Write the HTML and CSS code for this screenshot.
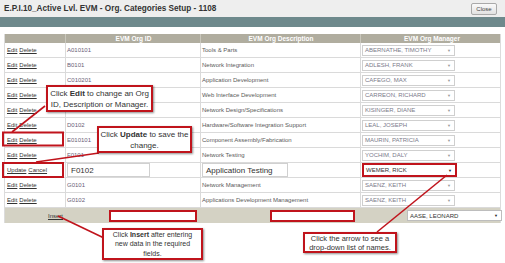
FILE: index.html
```html
<!DOCTYPE html>
<html lang="en">

<head>
  <meta charset="UTF-8" />
  <title>EVM Org Categories Setup</title>
  <link rel="stylesheet" href="styles.css">
</head>

<body>
  <div class="page">
    <div class="titlebar">
      <h1>E.P.I.10_Active Lvl. EVM - Org. Categories Setup - 1108</h1>
      <button class="close">Close</button>
    </div>
    <div class="band"></div>

    <div class="grid">
      <div class="row head">
        <div></div>
        <div>EVM Org ID</div>
        <div>EVM Org Description</div>
        <div>EVM Org Manager</div>
      </div>

      <div class="row">
        <div class="links"><a>Edit</a> <a>Delete</a></div>
        <div class="id">A010101</div>
        <div>Tools &amp; Parts</div>
        <div><span class="sel">ABERNATHE, TIMOTHY<i>▼</i></span></div>
      </div>
      <div class="row">
        <div class="links"><a>Edit</a> <a>Delete</a></div>
        <div class="id">B0101</div>
        <div>Network Integration</div>
        <div><span class="sel">ADLESH, FRANK<i>▼</i></span></div>
      </div>
      <div class="row">
        <div class="links"><a>Edit</a> <a>Delete</a></div>
        <div class="id">C010201</div>
        <div>Application Development</div>
        <div><span class="sel">CAFEGO, MAX<i>▼</i></span></div>
      </div>
      <div class="row">
        <div class="links"><a>Edit</a> <a>Delete</a></div>
        <div class="id">C010301</div>
        <div>Web Interface Development</div>
        <div><span class="sel">CARREON, RICHARD<i>▼</i></span></div>
      </div>
      <div class="row">
        <div class="links"><a>Edit</a> <a>Delete</a></div>
        <div class="id">D0101</div>
        <div>Network Design/Specifications</div>
        <div><span class="sel">KISINGER, DIANE<i>▼</i></span></div>
      </div>
      <div class="row">
        <div class="links"><a>Edit</a> <a>Delete</a></div>
        <div class="id">D0102</div>
        <div>Hardware/Software Integration Support</div>
        <div><span class="sel">LEAL, JOSEPH<i>▼</i></span></div>
      </div>
      <div class="row">
        <div class="links"><a>Edit</a> <a>Delete</a></div>
        <div class="id">E010101</div>
        <div>Component Assembly/Fabrication</div>
        <div><span class="sel">MAURIN, PATRICIA<i>▼</i></span></div>
      </div>
      <div class="row">
        <div class="links"><a>Edit</a> <a>Delete</a></div>
        <div class="id">F0101</div>
        <div>Network Testing</div>
        <div><span class="sel">YOCHIM, DALY<i>▼</i></span></div>
      </div>
      <div class="row editing">
        <div class="links"><a>Update</a> <a>Cancel</a></div>
        <div><span class="field id-field">F0102</span></div>
        <div><span class="field desc-field">Application Testing</span></div>
        <div><span class="sel dark hl">WEMER, RICK<i>▼</i></span></div>
      </div>
      <div class="row">
        <div class="links"><a>Edit</a> <a>Delete</a></div>
        <div class="id">G0101</div>
        <div>Network Management</div>
        <div><span class="sel">SAENZ, KEITH<i>▼</i></span></div>
      </div>
      <div class="row">
        <div class="links"><a>Edit</a> <a>Delete</a></div>
        <div class="id">G0102</div>
        <div>Applications Development Management</div>
        <div><span class="sel">SAENZ, KEITH<i>▼</i></span></div>
      </div>

      <div class="row foot">
        <div class="insert"><a>Insert</a></div>
        <div><span class="field new-id hl"></span></div>
        <div><span class="field new-desc hl"></span></div>
        <div><span class="sel dark new-mgr">AASE, LEONARD<i>▼</i></span></div>
      </div>
    </div>

    <!-- callout connectors and highlight boxes -->
    <svg class="overlay" width="505" height="263" viewBox="0 0 505 263">
      <g stroke="#c0141c" stroke-width="1.6" fill="none">
        <line x1="45" y1="106" x2="12" y2="132" />
        <line x1="99" y1="153" x2="36" y2="162" />
        <line x1="58" y1="216" x2="104" y2="238" />
        <line x1="447" y1="175" x2="377" y2="232" />
        <rect x="3" y="132.5" width="60" height="13" stroke-width="2" />
        <rect x="3" y="163" width="60" height="14" stroke-width="2" />
      </g>
    </svg>

    <div class="callout c-edit"><p>Click <b>Edit</b> to change an Org ID, Description or Manager.</p></div>
    <div class="callout c-update"><p>Click <b>Update</b> to save the change.</p></div>
    <div class="callout c-insert"><p>Click <b>Insert</b> after entering new data in the required fields.</p></div>
    <div class="callout c-arrow"><p>Click the arrow to see a drop-down list of names.</p></div>
  </div>
</body>

</html>
```

FILE: styles.css
```css
* {
  box-sizing: border-box;
  margin: 0;
  padding: 0;
  font-family: 'Liberation Sans', Arial, sans-serif;
}

body {
  background-color: white;
  width: 505px;
  height: 263px;
  overflow: hidden;
}

.page {
  position: relative;
  width: 505px;
  height: 263px;
}

.titlebar {
  height: 17px;
  background-color: #eeeeee;
  display: flex;
  justify-content: space-between;
  align-items: center;
  padding: 0 8px 0 4px;
}

.titlebar h1 {
  font-size: 8.2px;
  font-weight: bold;
  color: #333;
}

.close {
  width: 26px;
  height: 12px;
  font-size: 6px;
  color: #444;
  background: linear-gradient(#fafafa, #e2e2e2);
  border: 1px solid #a9a9a9;
  border-radius: 2px;
}

.band {
  height: 10px;
  background-color: #6e898c;
}

.grid {
  margin: 7px 0 0 4px;
  width: 497px;
  border-left: 1px solid #dcdcdc;
  border-right: 1px solid #dcdcdc;
}

.row {
  display: grid;
  grid-template-columns: 60px 135px 160px 142px;
  height: 15px;
  border-bottom: 1px solid #dadada;
  font-size: 6px;
  color: #5a5a5a;
}

.row > div {
  display: flex;
  align-items: center;
  padding-left: 1px;
  border-left: 1px solid #dadada;
  white-space: nowrap;
  overflow: hidden;
}

.row > div:first-child {
  border-left: none;
  padding-left: 2px;
}

.row.head {
  height: 9px;
  background-color: #b0ad9f;
  border-bottom: none;
}

.row.head > div {
  justify-content: center;
  color: white;
  font-weight: bold;
  font-size: 6.5px;
  border-left: 1px solid #c9c7bc;
}

.row.head > div:first-child {
  border-left: none;
}

.links a,
.insert a {
  color: #333;
  text-decoration: underline;
  margin-right: 2px;
}

.id {
  color: #6a6078;
}

.sel {
  display: flex;
  align-items: center;
  justify-content: space-between;
  width: 93px;
  height: 11px;
  padding: 0 3px 0 2px;
  border: 1px solid #cfcfcf;
  background-color: white;
  color: #7a7a8a;
  font-size: 6px;
}

.sel i {
  font-style: normal;
  font-size: 4px;
  color: #9a9a9a;
}

.sel.dark {
  color: #333;
}

.sel.dark i {
  color: #222;
}

.hl {
  border: 2px solid #c0141c !important;
}

.row.editing .sel {
  height: 14px;
  width: 95px;
}

.field {
  display: flex;
  align-items: center;
  height: 14px;
  border: 1px solid #d0d0d0;
  background-color: white;
  color: #333;
  font-size: 8px;
  padding-left: 3px;
}

.id-field {
  width: 83px;
}

.desc-field {
  width: 86px;
}

.row.foot {
  background-color: #d4d2c4;
  border-bottom: none;
}

.row.foot > div {
  border-left: none;
}

.insert {
  justify-content: flex-end;
}

.new-id {
  margin-left: 43px;
  width: 88px;
  height: 12px;
}

.new-desc {
  margin-left: 69px;
  width: 85px;
  height: 12px;
}

.new-mgr {
  margin-left: 46px;
  width: 95px;
  height: 11px;
  border-color: #bdbdbd;
}

.overlay {
  position: absolute;
  left: 0;
  top: 0;
  pointer-events: none;
}

.callout {
  position: absolute;
  display: flex;
  align-items: center;
  justify-content: center;
  background-color: white;
  border: 2px solid #c0141c;
  box-shadow: 1px 1px 2px rgba(0, 0, 0, 0.45);
  color: #333;
  font-size: 8px;
  line-height: 11px;
}

.callout p {
  text-align: center;
}

.c-edit {
  left: 46px;
  top: 85px;
  width: 107px;
  height: 27px;
}

.c-update {
  left: 97px;
  top: 126px;
  width: 95px;
  height: 27px;
}

.c-insert {
  left: 102px;
  top: 228px;
  width: 101px;
  height: 32px;
  font-size: 7px;
  line-height: 9.5px;
  padding: 0 2px;
}

.c-arrow {
  left: 303px;
  top: 232px;
  width: 94px;
  height: 21px;
  font-size: 7.5px;
  line-height: 9px;
}
```
